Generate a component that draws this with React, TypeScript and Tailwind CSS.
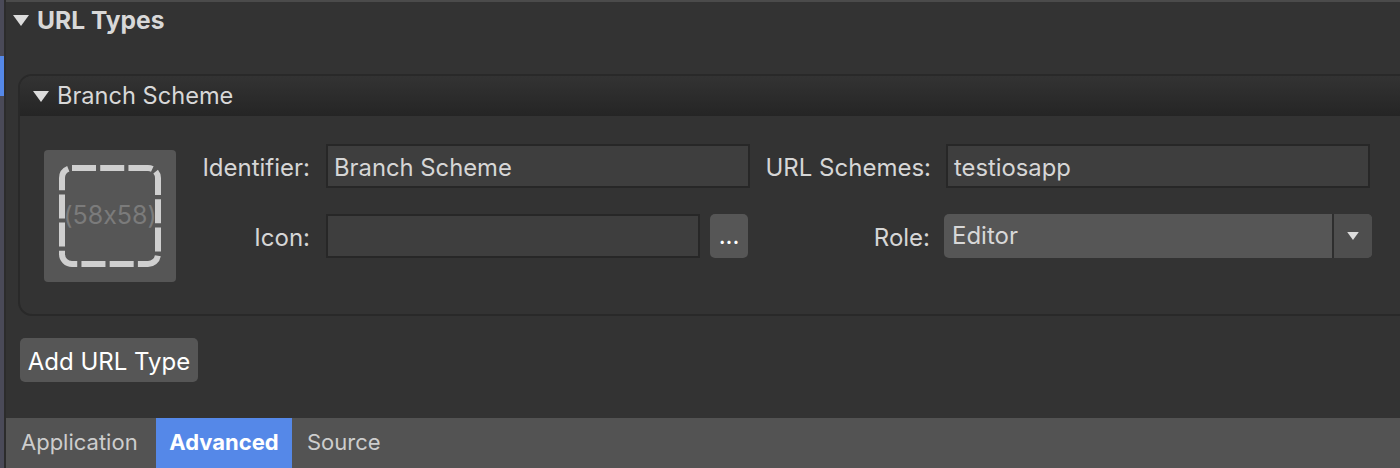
const labelClass = "text-right text-[24px] leading-[48px] text-[#d6d6d6]"
const inputClass = "h-[44px] border-2 border-[#272727] bg-[#3e3e3e] px-[6px] text-[23.8px] leading-[43px] text-[#d6d6d6]"

function Triangle({ className }: { className: string }) {
  return (
    <svg className={className} viewBox="0 0 16 11" width="16" height="11">
      <path d="M0 0h16L8 11z" fill="#dcdcdc" />
    </svg>
  )
}

function IconWell() {
  return (
    <div className="relative flex h-[132px] w-[132px] items-center justify-center rounded-[4px] bg-[#565656]">
      <svg className="absolute left-[15px] top-[15px]" width="102" height="102" viewBox="0 0 102 102" fill="none">
        <rect x="3" y="3" width="96" height="96" rx="10" stroke="#cfcfcf" strokeWidth="6" strokeDasharray="24 4.22" />
      </svg>
      <span className="relative text-[25px] text-[#7b7b7b] [font-feature-settings:'calt'_0]">(58x58)</span>
    </div>
  )
}

export default function App() {
  return (
    <div className="flex h-[468px] w-[1400px] overflow-hidden bg-[#333333]" style={{ fontFamily: "Inter, 'Liberation Sans', sans-serif" }}>
      <div className="w-[4px] shrink-0 bg-[#4a4a58] pt-[56px]">
        <div className="h-[40px] bg-[#5588e8]" />
      </div>
      <div className="flex min-w-0 flex-1 flex-col border-l-2 border-[#2c2c2c]">
        <div className="h-[2px] bg-[#4b4b4b]" />
        <div className="flex-1 pl-[12px]">
          <div className="-ml-[6px] flex h-[36px] items-center">
            <Triangle className="ml-[1px]" />
            <span className="ml-[8px] text-[24.6px] font-bold text-[#d8d8d8]">URL Types</span>
          </div>
          <div className="mt-[36px] h-[242px] w-[1420px] overflow-hidden rounded-[14px] border-2 border-[#292929]">
            <div className="flex h-[40px] items-center bg-gradient-to-b from-[#333333] to-[#252525] pl-[13px]">
              <Triangle />
              <span className="ml-[8px] text-[23.6px] text-[#d8d8d8]">Branch Scheme</span>
            </div>
            <div className="flex pl-[24px] pt-[28px]">
              <div className="pt-[6px]"><IconWell /></div>
              <div className="ml-[10px] grid h-[114px] grid-cols-[140px_424px_196px_426px] grid-rows-[44px_44px] gap-y-[26px]">
                <div className={labelClass + " pr-[16px]"}>Identifier:</div>
                <div className={inputClass}>Branch Scheme</div>
                <div className={labelClass + " pr-[15px]"}>URL Schemes:</div>
                <div className={inputClass + " w-[424px]"}>testiosapp</div>
                <div className={labelClass + " pr-[16px]"}>Icon:</div>
                <div className="flex gap-[10px]">
                  <div className={inputClass + " w-[374px]"} />
                  <button className="flex h-[44px] w-[38px] items-end justify-center rounded-[5px] bg-[#565656] pb-[10px] text-[24px] leading-none text-white">
                    <span>...</span>
                  </button>
                </div>
                <div className={labelClass + " pr-[16px]"}>Role:</div>
                <div className="-ml-[2px] flex h-[44px] w-[428px] overflow-hidden rounded-[5px] bg-[#565656]">
                  <span className="flex-1 pl-[8px] text-[24px] leading-[43px] text-[#d8d8d8]">Editor</span>
                  <div className="flex w-[40px] items-center justify-center border-l-2 border-[#2e2e2e] bg-[#4e4e4e]">
                    <Triangle className="h-[8px] w-[14px]" />
                  </div>
                </div>
              </div>
            </div>
          </div>
          <button className="mt-[22px] ml-[2px] h-[44px] w-[178px] rounded-[5px] bg-[#565656] pt-[3px] text-[24px] text-white">Add URL Type</button>
        </div>
        <div className="flex h-[50px] bg-[#535353] text-[22px] leading-[49px] text-[#cdcdcd]">
          <div className="w-[150px] pl-[15px]">Application</div>
          <div className="w-[136px] bg-[#5588e8] text-center font-bold text-white">Advanced</div>
          <div className="pl-[15px]">Source</div>
        </div>
      </div>
    </div>
  )
}
